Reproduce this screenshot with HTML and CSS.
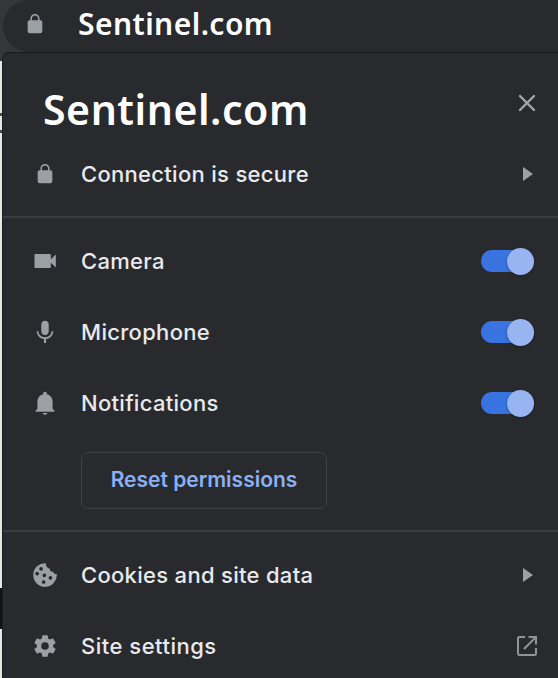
FILE: index.html
```html
<!DOCTYPE html>
<html lang="en">
<head>
<meta charset="utf-8">
<title>Sentinel.com</title>
<link rel="stylesheet" href="styles.css">
</head>
<body>
<svg class="defs" width="0" height="0">
  <symbol id="lock" viewBox="0 0 24 24"><path d="M18 8h-1V6c0-2.760-2.240-5-5-5S7 3.240 7 6v2H6c-1.100 0-2 .9-2 2v10c0 1.100.9 2 2 2h12c1.100 0 2-.9 2-2V10c0-1.100-.9-2-2-2zM15.300 8H8.700V6c0-1.820 1.480-3.300 3.300-3.300s3.300 1.480 3.300 3.300z"/></symbol>
  <symbol id="arrow" viewBox="0 0 10 14"><path d="M0 0v14l10-7z"/></symbol>
</svg>
<header class="toolbar">
  <div class="address">
    <svg class="address-lock"><use href="#lock"/></svg>
    <span class="address-text">Sentinel.com</span>
  </div>
</header>
<div class="page">
  <div class="page-edge"></div>
  <main class="popup">
    <div class="title-row">
      <h1>Sentinel.com</h1>
      <svg class="close" viewBox="0 0 18 18"><path d="M2 2l14 14M16 2L2 16"/></svg>
    </div>
    <div class="row connection">
      <span class="icon"><svg class="lock"><use href="#lock"/></svg></span>
      <span class="label">Connection is secure</span>
      <svg class="arrow"><use href="#arrow"/></svg>
    </div>
    <section class="permissions">
      <div class="row">
        <span class="icon"><svg class="large" viewBox="0 0 24 24"><path d="M17 10.500V6.800c0-.5-.4-.9-.9-.9H3.900c-.5 0-.9.4-.9.9v10.400c0 .5.4.9.9.9h12.200c.5 0 .9-.4.9-.9v-3.700l4.300 4V6.500z"/></svg></span>
        <span class="label">Camera</span><span class="toggle"></span>
      </div>
      <div class="row">
        <span class="icon"><svg class="large" viewBox="0 0 24 24"><path d="M12 14.500c1.900 0 3.200-1.340 3.200-3.200V5.500c0-1.860-1.300-3.200-3.200-3.200S8.800 3.640 8.800 5.500v5.800c0 1.860 1.300 3.200 3.200 3.200zm5.600-3.200c0 3-2.600 5.100-5.600 5.100s-5.600-2.100-5.600-5.100H4.900c0 3.400 2.700 6.200 6.200 6.700v3.500h1.800V18c3.500-.5 6.200-3.300 6.200-6.700z"/></svg></span>
        <span class="label">Microphone</span><span class="toggle"></span>
      </div>
      <div class="row">
        <span class="icon"><svg class="large" viewBox="0 0 24 24"><path d="M12 22c1.100 0 2-.7 2-1.500h-4c0 .8.900 1.500 2 1.500zm6.500-5v-6c0-3.200-1.800-5.900-4.900-6.600v-.6c0-.83-.67-1.500-1.600-1.500s-1.600.67-1.600 1.500v.6C7.300 5.100 5.500 7.800 5.500 11v6L4 18.500v1h16v-1z"/></svg></span>
        <span class="label">Notifications</span><span class="toggle"></span>
      </div>
      <button class="reset">Reset permissions</button>
    </section>
    <section class="site">
      <div class="row">
        <span class="icon"><svg class="cookie" viewBox="0 0 24 24"><path fill-rule="evenodd" d="M12.800.2A11.800 11.800 0 1 0 23.800 11c-2 .1-3.200-.7-3.700-2.300-2.200.4-3.600-1-3.200-3.100-2.700-.2-4.200-2.300-4.100-5.400zM9.900 5.800a1.850 1.850 0 1 1-3.700 0 1.850 1.850 0 0 1 3.700 0zM6 10.600a1.850 1.850 0 1 1-3.700 0 1.850 1.850 0 0 1 3.700 0zM13.200 12.300a1.850 1.850 0 1 1-3.700 0 1.850 1.850 0 0 1 3.700 0zM19.300 14.800a1.850 1.850 0 1 1-3.700 0 1.850 1.850 0 0 1 3.700 0zM12.500 19a1.850 1.850 0 1 1-3.700 0 1.850 1.850 0 0 1 3.700 0z"/></svg></span>
        <span class="label">Cookies and site data</span>
        <svg class="arrow"><use href="#arrow"/></svg>
      </div>
      <div class="row settings">
        <span class="icon"><svg class="gear" viewBox="0 0 24 24"><path d="M19.430 12.980c.04-.32.07-.64.07-.98s-.03-.66-.07-.98l2.110-1.650c.19-.15.24-.42.12-.64l-2-3.460c-.12-.22-.39-.3-.61-.22l-2.490 1c-.52-.4-1.080-.73-1.690-.98l-.38-2.650C14.460 2.180 14.250 2 14 2h-4c-.25 0-.46.18-.49.42l-.38 2.650c-.61.25-1.170.59-1.690.98l-2.490-1c-.23-.09-.49 0-.61.22l-2 3.460c-.13.22-.07.49.12.64l2.110 1.650c-.04.32-.07.65-.07.98s.03.66.07.98l-2.110 1.650c-.19.15-.24.42-.12.64l2 3.460c.12.22.39.3.61.22l2.490-1c.52.4 1.080.73 1.690.98l.38 2.650c.03.24.24.42.49.42h4c.25 0 .46-.18.49-.42l.38-2.650c.61-.25 1.170-.59 1.690-.98l2.490 1c.23.09.49 0 .61-.22l2-3.460c.12-.22.07-.49-.12-.64zM12 15.500a3.500 3.500 0 1 1 0-7 3.500 3.500 0 0 1 0 7z"/></svg></span>
        <span class="label">Site settings</span>
        <svg class="external" viewBox="0 0 20 20"><path d="M8 1H2.500Q1 1 1 2.500v15Q1 19 2.500 19h15q1.500 0 1.500-1.500V12M11.500 1H19v7.500M18.500 1.500L7 13"/></svg>
      </div>
    </section>
  </main>
</div>
</body>
</html>
```

FILE: styles.css
```css
* { box-sizing: border-box; }
body {
  margin: 0;
  height: 678px;
  overflow: hidden;
  background: #35363a;
  color: #e8eaed;
  font: 450 22px/30px Inter, "Liberation Sans", sans-serif;
}
svg { display: block; flex: none; fill: #9aa0a6; }
.defs { position: absolute; }
.toolbar { height: 52px; padding-left: 3px; }
.address {
  height: 52px;
  display: flex;
  align-items: center;
  padding: 0 0 4px 21px;
  background: #292a2d;
  border-radius: 26px 0 0 26px;
}
.address-lock { width: 22px; height: 22px; }
.address-text {
  margin-left: 32px;
  color: #fff;
  font: 600 30px/40px "Noto Sans", sans-serif;
  letter-spacing: 0.45px;
}
.page { display: flex; height: 626px; }
.page-edge {
  width: 2px;
  flex: none;
  background: linear-gradient(#35363a 9px, #e7e8e6 9px 61px, #4b4c4e 61px 64px, #e7e8e6 64px 78px, #4b4c4e 78px 81px, #e7e8e6 81px 536px, #111214 536px 577px, #e7e8e6 577px);
}
.popup {
  flex: 1;
  border-top: 1px solid #17181a;
  border-left: 1px solid #1d1e20;
  border-radius: 7px 0 0;
  background: #292a2d;
}
.title-row {
  height: 86px;
  display: flex;
  align-items: center;
  justify-content: space-between;
  padding: 26px 22px 0 40px;
}
h1 {
  margin: 0;
  color: #fff;
  font: 600 41px/60px "Noto Sans", sans-serif;
  letter-spacing: 0.55px;
}
.close { width: 18px; height: 18px; margin-bottom: 12px; fill: none; stroke: #a3a7ac; stroke-width: 2.4; stroke-linecap: round; }
.row { height: 71px; display: flex; align-items: center; padding: 0 24px 0 26px; }
.connection { padding-bottom: 1px; }
.icon { width: 32px; margin-right: 20px; display: flex; justify-content: center; }
.label { flex: 1; white-space: nowrap; letter-spacing: 0.3px; }
.settings .label { letter-spacing: 0.5px; }
.lock { width: 22px; height: 22px; }
.large { width: 28px; height: 28px; }
.cookie { width: 24px; height: 24px; }
.gear { width: 26px; height: 26px; }
.arrow { width: 10px; height: 14px; margin-right: 1px; }
.external { width: 20px; height: 20px; margin-right: -3px; fill: none; stroke: #8f9499; stroke-width: 2; }
.permissions { margin-top: 6px; padding-top: 8px; height: 314px; border-top: 2px solid #3c3d41; }
.permissions .row { padding-bottom: 1px; }
.toggle {
  width: 53px;
  height: 22px;
  border-radius: 11px;
  background: #3873e0;
  display: flex;
  align-items: center;
  justify-content: flex-end;
}
.toggle::after {
  content: "";
  width: 27px;
  height: 27px;
  flex: none;
  border-radius: 50%;
  background: #98b4f1;
  box-shadow: 0 1px 3px #0004;
}
.reset {
  display: block;
  width: 246px;
  height: 57px;
  margin: 13px 0 0 78px;
  padding: 0 0 1px;
  border: 1px solid #3f4044;
  border-radius: 7px;
  background: transparent;
  color: #8ab0f5;
  font: 600 21px/30px Inter, sans-serif;
}
.site { border-top: 2px solid #3c3d41; padding-top: 7px; }
```
